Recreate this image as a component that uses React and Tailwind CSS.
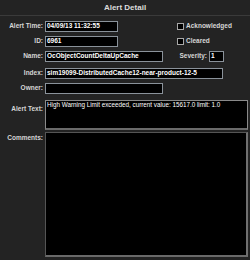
import React from 'react';

const font = { fontFamily: '"Liberation Sans", Arial, sans-serif' };

const Label = ({ children, className = '' }) => (
    <div className={`text-[6.5px] font-bold text-[#d6d6d6] leading-none whitespace-nowrap ${className}`}>{children}</div>
);

const Field = ({ value, width }) => (
    <div className={`${width} h-[11px] bg-black border border-[#8a929a] flex items-center px-[1px] text-[6.5px] font-bold text-white leading-none whitespace-nowrap overflow-hidden`}>
        {value}
    </div>
);

const Check = ({ label }) => (
    <div className="flex items-center gap-[2px]">
        <div className="w-[7px] h-[7px] bg-black border border-[#a8a8a8]" />
        <Label>{label}</Label>
    </div>
);

const Row = ({ label, children, className = '' }) => (
    <div className={`flex items-center h-[11px] ${className}`}>
        <Label className="w-[43px] text-right">{label}</Label>
        <div className="ml-[2px] flex items-center">{children}</div>
    </div>
);

export default function App() {
    return (
        <div className="w-[250px] h-[260px] bg-[#232323] overflow-hidden" style={font}>
            <div className="h-[16px] border-b border-[#3a3a3a] flex items-center justify-center">
                <span className="text-[8px] font-bold text-[#dcdcdc] leading-none">Alert Detail</span>
            </div>

            <div className="pt-[5px]">
                <Row label="Alert Time:">
                    <Field value="04/09/13 11:32:55" width="w-[73px]" />
                    <div className="ml-[59px]"><Check label="Acknowledged" /></div>
                </Row>
                <Row label="ID:" className="mt-[4px]">
                    <Field value="6961" width="w-[73px]" />
                    <div className="ml-[59px]"><Check label="Cleared" /></div>
                </Row>
                <Row label="Name:" className="mt-[4px]">
                    <Field value="OcObjectCountDeltaUpCache" width="w-[118px]" />
                    <Label className="w-[44px] text-right">Severity:</Label>
                    <div className="ml-[2px]"><Field value="1" width="w-[15px]" /></div>
                </Row>
                <Row label="Index:" className="mt-[6px]">
                    <Field value="sim19099-DistributedCache12-near-product-12-5" width="w-[178px]" />
                </Row>
                <Row label="Owner:" className="mt-[4px]">
                    <Field value="" width="w-[118px]" />
                </Row>

                <div className="flex mt-[6px]">
                    <Label className="w-[43px] text-right pt-[6px]">Alert Text:</Label>
                    <div className="ml-[2px] w-[203px] h-[30px] bg-black border border-[#8a8a8a] border-b-2 border-b-[#6a6a6a] px-[1px] pt-[1px] text-[6.3px] text-white leading-none whitespace-nowrap overflow-hidden">
                        High Warning Limit exceeded, current value: 15617.0 limit: 1.0
                    </div>
                </div>

                <div className="flex mt-[2px]">
                    <Label className="w-[43px] text-right pt-[3px]">Comments:</Label>
                    <div className="ml-[2px] w-[203px] h-[125px] bg-black border border-[#555] border-r-2 border-b-2 border-r-[#707070] border-b-[#6a6a6a]" />
                </div>
            </div>
        </div>
    );
}
